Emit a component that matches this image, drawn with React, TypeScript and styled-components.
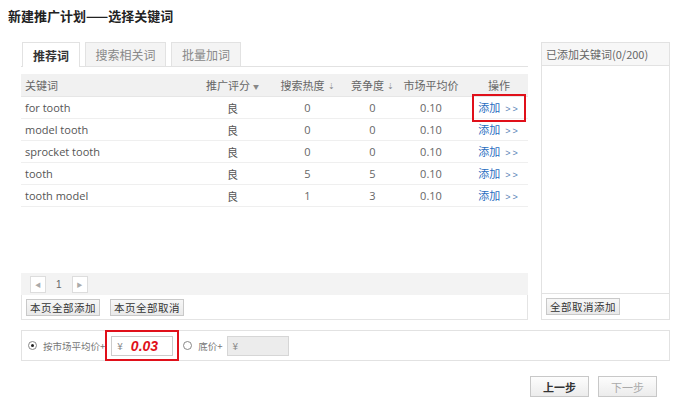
import styled, { createGlobalStyle } from "styled-components";

const GlobalStyle = createGlobalStyle`
  body {
    margin: 0;
    background: #fff;
    font-family: "Noto Sans CJK SC", "Microsoft YaHei", "Liberation Sans", sans-serif;
    font-size: 11px;
    color: #555;
  }
`;

const Page = styled.div`
  width: 675px;
  height: 399px;
  padding: 8px 0 0 8px;
  box-sizing: border-box;
`;

const Title = styled.h1`
  margin: 0;
  font-size: 13px;
  line-height: 16px;
  font-weight: bold;
  color: #222;
`;

const Main = styled.div`
  display: flex;
  gap: 13px;
  margin: 18px 0 0 13px;
  width: 649px;
  height: 278px;
`;

const LeftCol = styled.div`
  width: 507px;
  display: flex;
  flex-direction: column;
`;

const Tabs = styled.div`
  display: flex;
  gap: 5px;
  height: 24px;
  padding-left: 1px;
  border-bottom: 1px solid #e2e2e2;
  box-sizing: content-box;
`;

const Tab = styled.div<{ $active?: boolean; $w: number }>`
  display: flex;
  align-items: center;
  justify-content: center;
  width: ${({ $w }) => $w}px;
  box-sizing: border-box;
  border: 1px solid #e2e2e2;
  border-bottom: none;
  margin-bottom: ${({ $active }) => ($active ? "-1px" : "0")};
  height: ${({ $active }) => ($active ? "25px" : "24px")};
  background: ${({ $active }) => ($active ? "#fff" : "#f4f4f4")};
  color: ${({ $active }) => ($active ? "#333" : "#888")};
  font-weight: ${({ $active }) => ($active ? "bold" : "normal")};
  font-size: 12px;
`;

const TableArea = styled.div`
  flex: 1;
  margin-top: 7px;
`;

const Grid = styled.div`
  display: grid;
  grid-template-columns: 174px 75px 75px 55px 62px 66px;
  height: 22px;
  box-sizing: border-box;
  align-items: center;
  border-bottom: 1px solid #efefef;
`;

const HeadRow = styled(Grid)`
  height: 23px;
  background: #f1f1f1;
  color: #666;
  border-bottom: 1px solid #e6e6e6;
`;

const Cell = styled.div<{ $left?: boolean }>`
  text-align: ${({ $left }) => ($left ? "left" : "center")};
  padding-left: ${({ $left }) => ($left ? "4px" : "0")};
  white-space: nowrap;
`;

const ActionCell = styled(Cell)`
  padding-left: 8px;
`;

const KeywordCell = styled(Cell)`
  font-family: "Open Sans", "Noto Sans", sans-serif;
  font-size: 11px;
  color: #555;
`;

const NumCell = styled(Cell)`
  font-family: "Open Sans", "Noto Sans", sans-serif;
  color: #666;
`;

const Arrow = styled.span<{ $small?: boolean }>`
  font-size: ${({ $small }) => ($small ? "6px" : "8px")};
  color: #888;
  margin-left: 3px;
  vertical-align: 1px;
`;

const AddLink = styled.span<{ $marked?: boolean }>`
  display: inline-block;
  color: #2a6ebf;
  line-height: 16px;
  padding: 0 1px;
  outline: ${({ $marked }) => ($marked ? "2px solid #e0101a" : "none")};
  outline-offset: 3px;
`;

const Chev = styled.span`
  font-family: "Liberation Sans", sans-serif;
  font-size: 9px;
  margin-left: 5px;
  color: #5b86b8;
  letter-spacing: 2px;
`;

const Pager = styled.div`
  display: flex;
  align-items: center;
  gap: 10px;
  height: 22px;
  padding-left: 9px;
  background: #f3f3f3;
`;

const PageBtn = styled.div`
  width: 14px;
  height: 15px;
  border: 1px solid #ddd;
  background: #fff;
  display: flex;
  align-items: center;
  justify-content: center;
  font-size: 6px;
  color: #aaa;
`;

const PageNum = styled.span`
  font-family: "Liberation Sans", sans-serif;
  font-size: 10px;
  color: #666;
`;

const ActionBar = styled.div`
  display: flex;
  align-items: center;
  gap: 10px;
  height: 24px;
  padding-left: 4px;
  border: 1px solid #e4e4e4;
  border-top: none;
`;

const SmallButton = styled.button`
  height: 17px;
  padding: 0 3px;
  border: 1px solid #c9c9c9;
  background: linear-gradient(#f7f7f7, #e9e9e9);
  font-family: inherit;
  font-size: 10.5px;
  color: #333;
  letter-spacing: 0.5px;
  line-height: 15px;
  border-radius: 0;
`;

const RightPanel = styled.div`
  width: 129px;
  border: 1px solid #e2e2e2;
  display: flex;
  flex-direction: column;
  box-sizing: border-box;
`;

const PanelHeader = styled.div`
  height: 23px;
  line-height: 22px;
  padding-left: 4px;
  background: #f7f7f7;
  border-bottom: 1px solid #e2e2e2;
  color: #666;
  box-sizing: border-box;
`;

const PanelBody = styled.div`
  flex: 1;
`;

const PanelFooter = styled.div`
  height: 25px;
  border-top: 1px solid #e2e2e2;
  display: flex;
  align-items: center;
  padding-left: 4px;
`;

const PriceBox = styled.div`
  display: flex;
  align-items: center;
  margin: 10px 0 0 13px;
  width: 649px;
  height: 31px;
  border: 1px solid #e2e2e2;
  box-sizing: border-box;
  padding-left: 6px;
  color: #666;
`;

const Radio = styled.span<{ $checked?: boolean }>`
  width: 9px;
  height: 9px;
  border-radius: 50%;
  border: 1px solid #888;
  box-sizing: border-box;
  display: inline-flex;
  align-items: center;
  justify-content: center;
  margin-right: 6px;
  background: #fff;

  &::after {
    content: "";
    width: 3px;
    height: 3px;
    border-radius: 50%;
    background: ${({ $checked }) => ($checked ? "#222" : "transparent")};
  }
`;

const Mark = styled.div`
  display: flex;
  align-items: center;
  height: 31px;
  padding: 0 4px;
  margin-left: 0;
  border: 2px solid #e0101a;
  box-sizing: border-box;
`;

const PriceInput = styled.div<{ $disabled?: boolean }>`
  display: flex;
  align-items: center;
  width: 62px;
  height: 20px;
  box-sizing: border-box;
  border: 1px solid ${({ $disabled }) => ($disabled ? "#d6d6d6" : "#ccc")};
  background: ${({ $disabled }) => ($disabled ? "#ececec" : "#fff")};
  padding-left: 5px;
  color: #888;
`;

const Yen = styled.span`
  font-size: 10px;
  color: #888;
`;

const PriceValue = styled.span`
  margin-left: 8px;
  color: #e0101a;
  font-family: "Liberation Sans", sans-serif;
  font-weight: bold;
  font-style: italic;
  font-size: 14px;
`;

const Label = styled.span`
  font-size: 9.5px;
  color: #777;
`;

const SecondOption = styled.div`
  display: flex;
  align-items: center;
  margin-left: 4px;
`;

const Footer = styled.div`
  display: flex;
  justify-content: flex-end;
  gap: 9px;
  margin-top: 15px;
  width: 649px;
`;

const StepButton = styled.button<{ $disabled?: boolean }>`
  width: 59px;
  height: 21px;
  border: 1px solid #c8c8c8;
  background: linear-gradient(#fdfdfd, #ececec);
  font-family: inherit;
  font-size: 11px;
  font-weight: ${({ $disabled }) => ($disabled ? "normal" : "bold")};
  color: ${({ $disabled }) => ($disabled ? "#aaa" : "#333")};
  border-radius: 0;
`;

const rows = [
  { kw: "for tooth", heat: 0, comp: 0 },
  { kw: "model tooth", heat: 0, comp: 0 },
  { kw: "sprocket tooth", heat: 0, comp: 0 },
  { kw: "tooth", heat: 5, comp: 5 },
  { kw: "tooth model", heat: 1, comp: 3 },
];

export default function App() {
  return (
    <Page>
      <GlobalStyle />
      <Title>新建推广计划——选择关键词</Title>
      <Main>
        <LeftCol>
          <Tabs>
            <Tab $active $w={58}>推荐词</Tab>
            <Tab $w={81}>搜索相关词</Tab>
            <Tab $w={70}>批量加词</Tab>
          </Tabs>
          <TableArea>
            <HeadRow>
              <Cell $left>关键词</Cell>
              <Cell>
                推广评分<Arrow $small>▼</Arrow>
              </Cell>
              <Cell>
                搜索热度<Arrow>⇣</Arrow>
              </Cell>
              <Cell>
                竞争度<Arrow>⇣</Arrow>
              </Cell>
              <Cell>市场平均价</Cell>
              <ActionCell>操作</ActionCell>
            </HeadRow>
            {rows.map((r, i) => (
              <Grid key={r.kw}>
                <KeywordCell $left>{r.kw}</KeywordCell>
                <Cell>良</Cell>
                <NumCell>{r.heat}</NumCell>
                <NumCell>{r.comp}</NumCell>
                <NumCell>0.10</NumCell>
                <ActionCell>
                  <AddLink $marked={i === 0}>
                    添加<Chev>&gt;&gt;</Chev>
                  </AddLink>
                </ActionCell>
              </Grid>
            ))}
          </TableArea>
          <Pager>
            <PageBtn>◀</PageBtn>
            <PageNum>1</PageNum>
            <PageBtn>▶</PageBtn>
          </Pager>
          <ActionBar>
            <SmallButton>本页全部添加</SmallButton>
            <SmallButton>本页全部取消</SmallButton>
          </ActionBar>
        </LeftCol>
        <RightPanel>
          <PanelHeader>已添加关键词(0/200)</PanelHeader>
          <PanelBody />
          <PanelFooter>
            <SmallButton>全部取消添加</SmallButton>
          </PanelFooter>
        </RightPanel>
      </Main>
      <PriceBox>
        <Radio $checked />
        <Label>按市场平均价+</Label>
        <Mark>
          <PriceInput>
            <Yen>¥</Yen>
            <PriceValue>0.03</PriceValue>
          </PriceInput>
        </Mark>
        <SecondOption>
          <Radio />
          <Label>底价+</Label>
          <PriceInput $disabled style={{ marginLeft: 4 }}>
            <Yen>¥</Yen>
          </PriceInput>
        </SecondOption>
      </PriceBox>
      <Footer>
        <StepButton>上一步</StepButton>
        <StepButton $disabled>下一步</StepButton>
      </Footer>
    </Page>
  );
}
